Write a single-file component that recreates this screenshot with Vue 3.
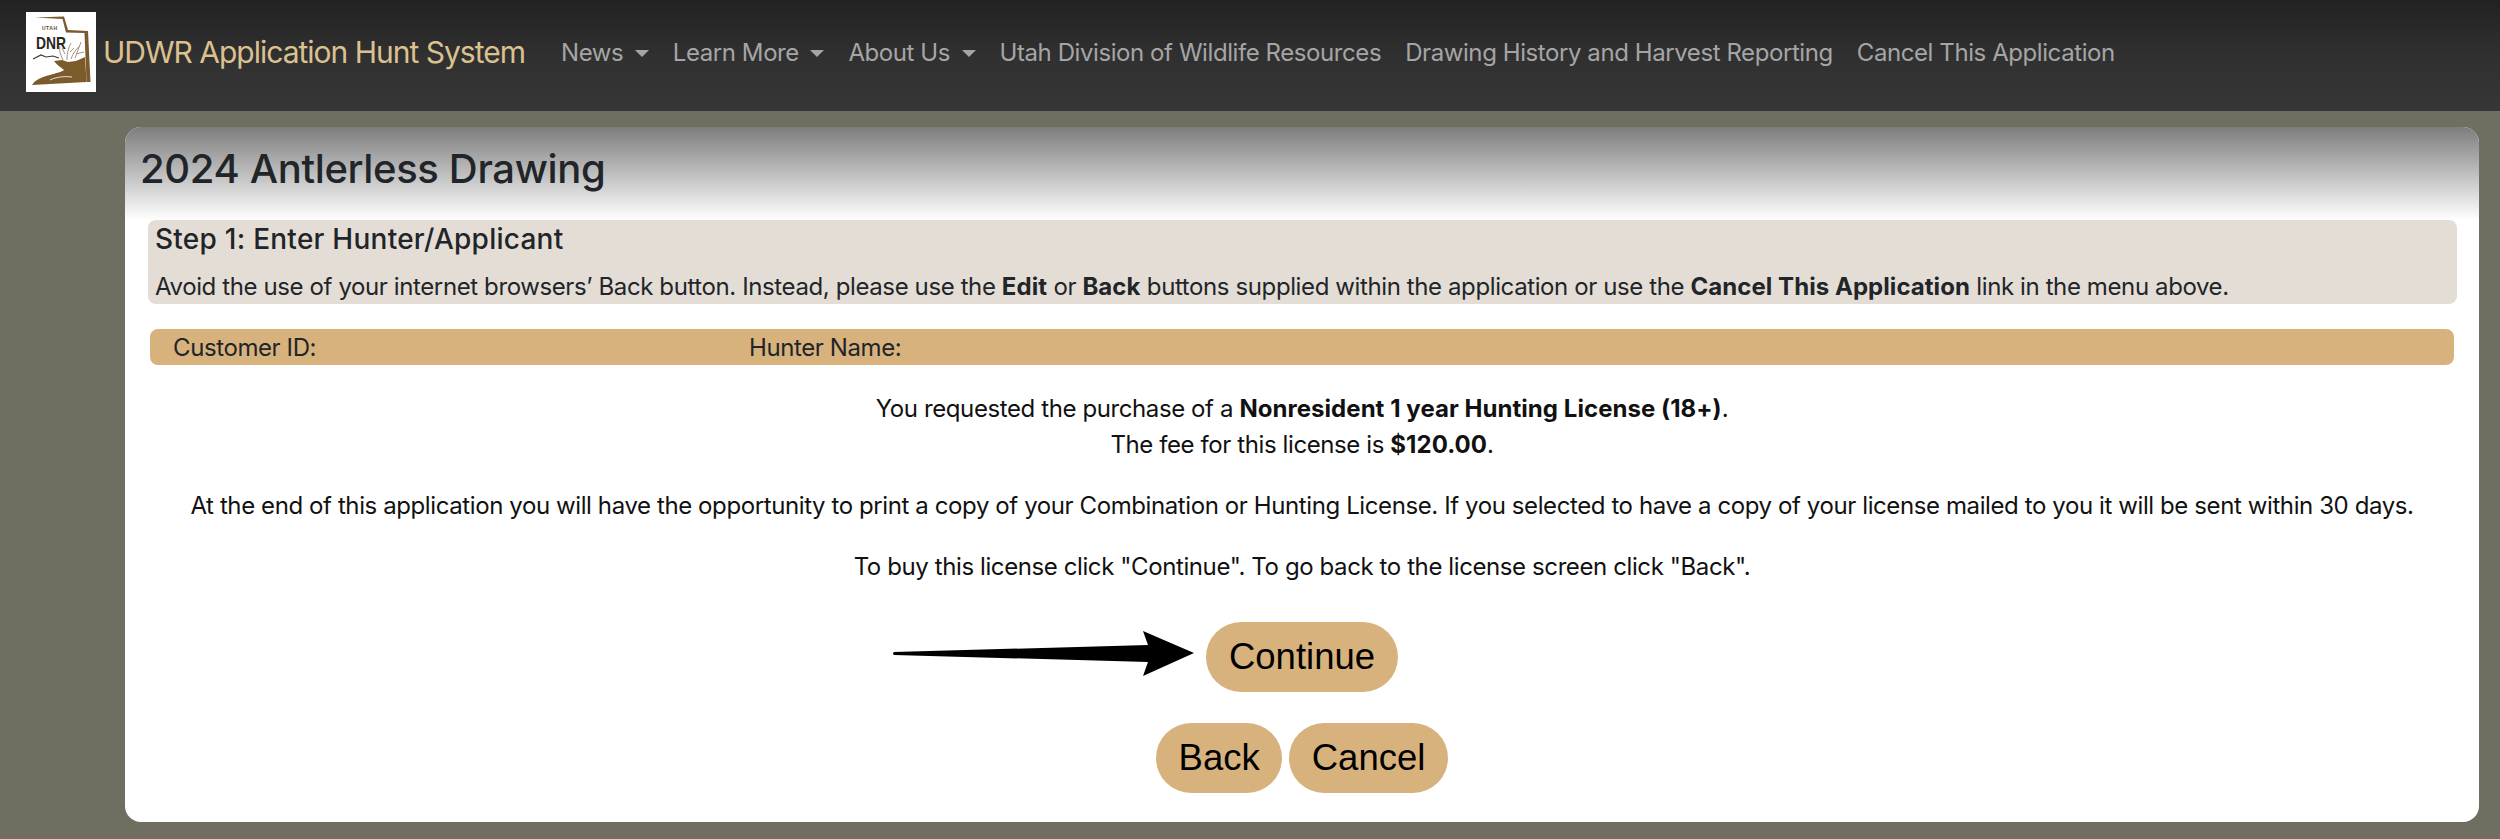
<script setup>
const menu = [
  { label: "News", caret: true },
  { label: "Learn More", caret: true },
  { label: "About Us", caret: true },
  { label: "Utah Division of Wildlife Resources" },
  { label: "Drawing History and Harvest Reporting" },
  { label: "Cancel This Application" },
];
</script>

<template>
  <div class="page">
    <nav class="navbar">
      <svg class="logo" viewBox="0 0 70 80">
        <rect width="70" height="80" fill="#fff" />
        <path d="M9 5.5L38 4.5L42 18L62 19L64.5 70L60.5 70L58.5 21L40 20.5L36.5 7Z" fill="#7b5a2c" />
        <path d="M6 73C9 68 15 65 24 63C30 61 36 60 38 58C33 54 30 52 28 49L36 48L42 50L50 49L59 45L60.5 70Z" fill="#7b5a2c" />
        <path d="M7 47L15 43L20 45L27 44L33 46" fill="none" stroke="#3d3a30" stroke-width="1.2" />
        <path d="M37 48C34 42 33 38 34 34M41 48C41 40 43 35 45 31M45 47C47 41 50 37 54 34M49 46L55 30M39 42L36 36M44 40L48 36M50 42L58 40" fill="none" stroke="#a3957c" stroke-width="1" />
        <path d="M24 68C30 65 38 64 46 65" fill="none" stroke="#fff" stroke-width="0.8" />
        <text x="16" y="18" class="logo-utah" textLength="15">UTAH</text>
        <text x="10" y="37" class="logo-dnr" textLength="30" lengthAdjust="spacingAndGlyphs">DNR</text>
      </svg>
      <a class="brand">UDWR Application Hunt System</a>
      <ul class="menu">
        <li v-for="item in menu" :key="item.label" :class="{ caret: item.caret }">{{ item.label }}</li>
      </ul>
    </nav>

    <main class="card">
      <header class="card-head">
        <h1>2024 Antlerless Drawing</h1>
      </header>

      <section class="step">
        <h2>Step 1: Enter Hunter/Applicant</h2>
        <p>
          Avoid the use of your internet browsers’ Back button. Instead, please use the <b>Edit</b> or
          <b>Back</b> buttons supplied within the application or use the <b>Cancel This Application</b>
          link in the menu above.
        </p>
      </section>

      <div class="info-bar">
        <span class="customer">Customer ID:</span>
        <span>Hunter Name:</span>
      </div>

      <div class="message">
        <p>
          You requested the purchase of a <b>Nonresident 1 year Hunting License (18+)</b>.<br />
          The fee for this license is <b>$120.00</b>.
        </p>
        <p>
          At the end of this application you will have the opportunity to print a copy of your Combination or
          Hunting License. If you selected to have a copy of your license mailed to you it will be sent within 30 days.
        </p>
        <p>To buy this license click "Continue". To go back to the license screen click "Back".</p>
      </div>

      <div class="actions">
        <div class="continue-wrap">
          <svg class="arrow" viewBox="0 0 303 46">
            <path d="M2 21L256 14L251 0L302 22L251 45L256 31L2 24Q0 22.5 2 21Z" fill="#000" />
          </svg>
          <button type="button" class="pill">Continue</button>
        </div>
        <div class="pair">
          <button type="button" class="pill">Back</button>
          <button type="button" class="pill">Cancel</button>
        </div>
      </div>
    </main>
  </div>
</template>

<style>
html,
body {
  margin: 0;
  background: #6f6e60;
}
</style>

<style scoped>
.page {
  min-height: 839px;
  font-family: Inter, "Liberation Sans", sans-serif;
  color: #212529;
  overflow: hidden;
}
.navbar {
  display: flex;
  align-items: center;
  height: 111px;
  padding: 0 0 7px 26px;
  box-sizing: border-box;
  background: linear-gradient(#222, #303030 50%, #363636);
}
.logo {
  width: 70px;
  height: 80px;
  flex: none;
}
.logo-utah {
  font: 700 5px "Liberation Sans", sans-serif;
  fill: #5b4a30;
}
.logo-dnr {
  font: 700 17px "Liberation Sans", sans-serif;
  fill: #2a261d;
}
.brand {
  margin-left: 7px;
  font-size: 30px;
  letter-spacing: -1px;
  color: #dcc190;
  white-space: nowrap;
}
.menu {
  display: flex;
  gap: 24px;
  margin: 0 0 0 36px;
  padding: 0;
  list-style: none;
  font-size: 24px;
  letter-spacing: -0.42px;
  color: #a5a5a5;
  white-space: nowrap;
}
.caret::after {
  content: "";
  display: inline-block;
  margin-left: 11.5px;
  vertical-align: 4px;
  border-top: 7px solid #a5a5a5;
  border-left: 7px solid transparent;
  border-right: 7px solid transparent;
}
.card {
  margin: 16px 21px 0 125px;
  height: 695px;
  background: #fff;
  border-radius: 16px;
  overflow: hidden;
}
.card-head {
  height: 93px;
  padding: 18px 15px 0;
  box-sizing: border-box;
  background: linear-gradient(#7d7d7d, #fff);
}
h1 {
  margin: 0;
  font-size: 40px;
  font-weight: 500;
  letter-spacing: -0.35px;
  line-height: 48px;
}
.step {
  margin: 0 22px 0 23px;
  height: 84px;
  padding: 2px 7px;
  box-sizing: border-box;
  background: #e4ddd5;
  border-radius: 8px;
}
h2 {
  margin: 0;
  font-size: 28px;
  font-weight: 500;
  letter-spacing: 0.25px;
  line-height: 34px;
}
.step p {
  margin: 13px 0 0;
  font-size: 24px;
  letter-spacing: -0.39px;
  line-height: 36px;
}
.info-bar {
  display: flex;
  align-items: center;
  margin: 25px 25px 0 25px;
  height: 36px;
  padding-left: 23px;
  background: #d8b27d;
  border-radius: 8px;
  font-size: 24px;
  letter-spacing: -0.4px;
}
.customer {
  width: 576px;
}
.message {
  margin-top: 26px;
  text-align: center;
  font-size: 24px;
  letter-spacing: -0.4px;
  line-height: 36px;
  color: #111;
}
.message p {
  margin: 0 0 25px;
}
b {
  letter-spacing: 0.05px;
}
.actions {
  display: flex;
  flex-direction: column;
  align-items: center;
  gap: 31px;
  margin-top: 37px;
}
.continue-wrap {
  position: relative;
}
.arrow {
  position: absolute;
  right: 100%;
  top: 9px;
  width: 303px;
  height: 46px;
  margin-right: 11px;
}
.pair {
  display: flex;
  gap: 7px;
}
.pill {
  height: 70px;
  padding: 0 22.5px;
  border: 0;
  border-radius: 35px;
  background: #d8b27d;
  color: #000;
  font-family: "Liberation Sans", sans-serif;
  font-size: 36.5px;
}
</style>
